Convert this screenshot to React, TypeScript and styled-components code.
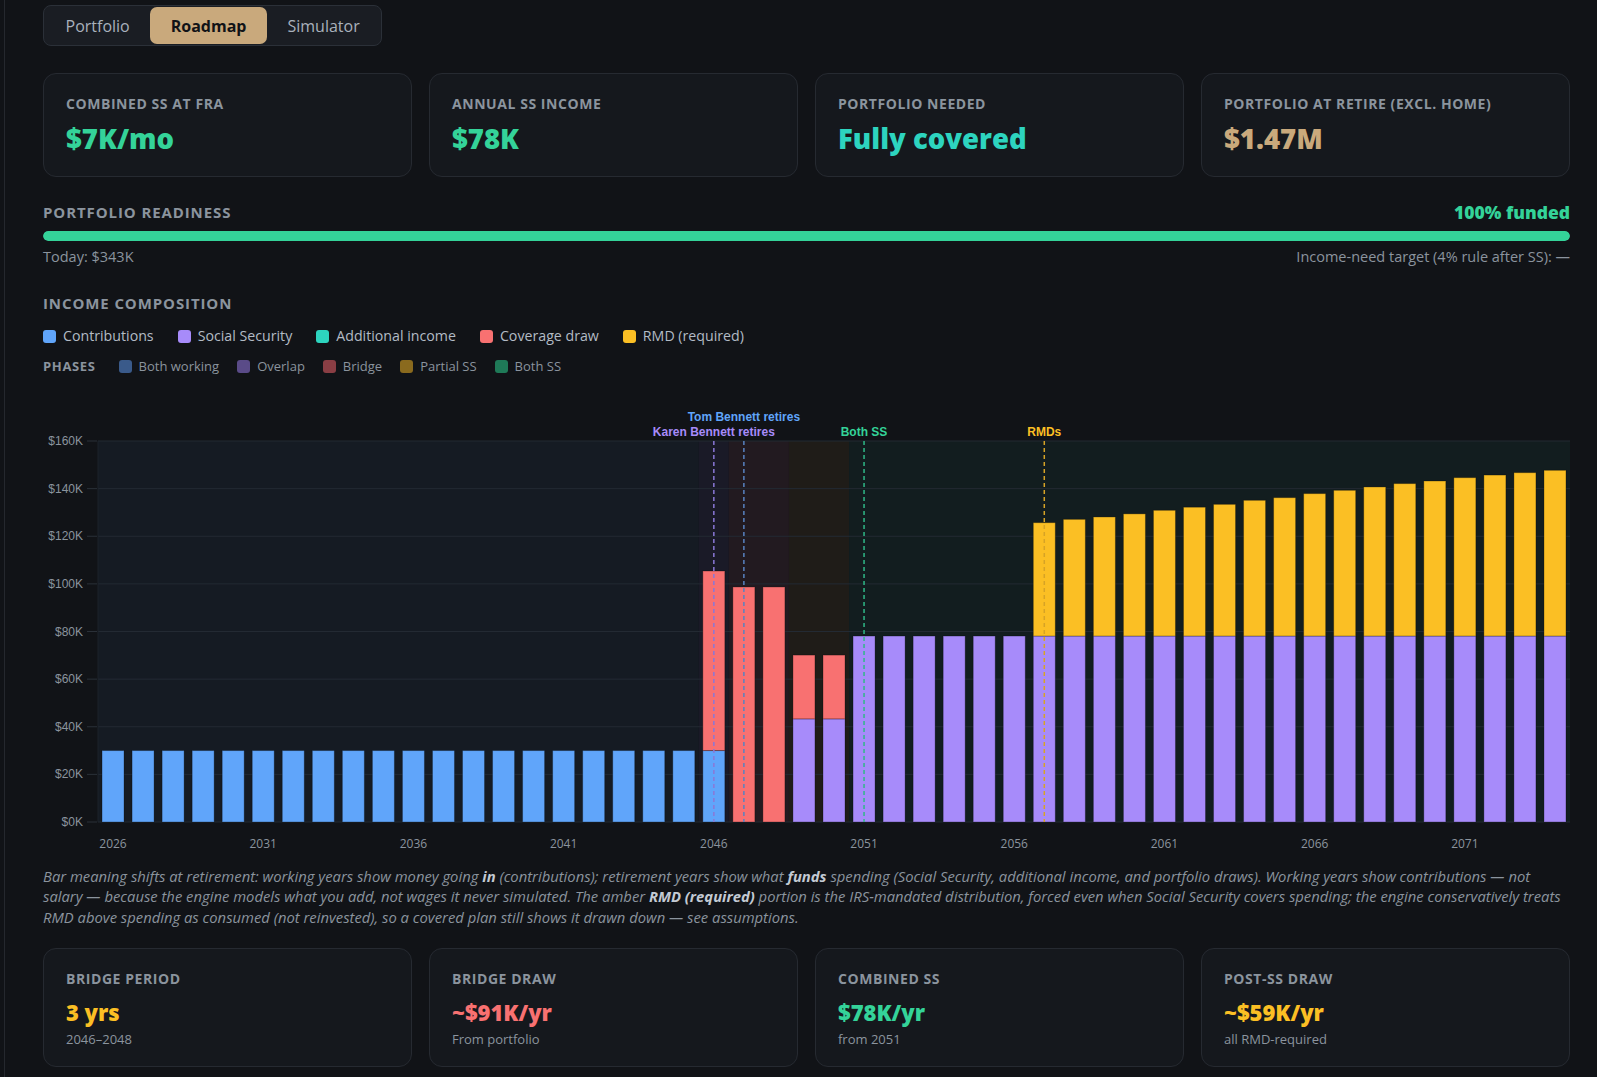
import styled, { createGlobalStyle } from "styled-components";

// ---------- Global Styles ----------
const GlobalStyle = createGlobalStyle`
  * { box-sizing: border-box; }
  html, body { overflow: hidden; }
  body {
    margin: 0;
    background: #111317;
    color: #c9d1d9;
    font-family: "Open Sans", "Noto Sans", sans-serif;
  }
`;

// ---------- palette ----------
const C = {
  contrib: "#60a5fa",
  ss: "#a78bfa",
  extra: "#2dd4bf",
  draw: "#f87171",
  rmd: "#fbbf24",
  green: "#34d399",
  tan: "#c9a97c",
  muted: "#8b949e",
};

// ---------- styled-components ----------
const S = {
  Page: styled.div`
    margin-left: 4px;
    border-left: 1px solid #25282e;
    min-height: 100vh;
    padding: 5px 27px 10px 38px;
    display: flex;
    flex-direction: column;
  `,
  Tabs: styled.nav`
    align-self: flex-start;
    display: flex;
    padding: 1px;
    border: 1px solid #2b3038;
    border-radius: 8px;
    background: #1a1d23;
  `,
  Tab: styled.button<{ $active?: boolean }>`
    height: 37px;
    padding: 0 20.5px;
    border: none;
    border-radius: 7px;
    font-family: inherit;
    font-size: 16px;
    font-weight: ${(p) => (p.$active ? 700 : 400)};
    color: ${(p) => (p.$active ? "#111317" : "#a9b1bc")};
    background: ${(p) => (p.$active ? C.tan : "transparent")};
    cursor: pointer;
  `,
  StatGrid: styled.div<{ $top: number }>`
    display: grid;
    grid-template-columns: repeat(4, 1fr);
    gap: 17px;
    margin-top: ${(p) => p.$top}px;
  `,
  Card: styled.div<{ $pad: string }>`
    background: #15181d;
    border: 1px solid #262a31;
    border-radius: 13px;
    padding: ${(p) => p.$pad};
  `,
  CardLabel: styled.div`
    font-size: 14px;
    line-height: 18px;
    font-weight: 700;
    letter-spacing: 0.04em;
    text-transform: uppercase;
    color: ${C.muted};
  `,
  CardValue: styled.div<{ $color: string; $big?: boolean }>`
    margin-top: ${(p) => (p.$big ? 8 : 9)}px;
    font-size: ${(p) => (p.$big ? 27.5 : 22)}px;
    line-height: ${(p) => (p.$big ? 36 : 30)}px;
    font-weight: 800;
    color: ${(p) => p.$color};
  `,
  CardSub: styled.div`
    margin-top: 3px;
    font-size: 13px;
    line-height: 18px;
    color: ${C.muted};
  `,
  SectionHead: styled.div<{ $top: number }>`
    display: flex;
    justify-content: space-between;
    align-items: center;
    margin-top: ${(p) => p.$top}px;
    height: 20px;
  `,
  SectionTitle: styled.h2`
    margin: 0;
    font-size: 15px;
    font-weight: 700;
    letter-spacing: 0.06em;
    text-transform: uppercase;
    color: ${C.muted};
  `,
  Funded: styled.span`
    font-size: 17.5px;
    font-weight: 800;
    color: ${C.green};
  `,
  Track: styled.div`
    margin-top: 9px;
    height: 10px;
    border-radius: 5px;
    background: #232830;
    overflow: hidden;
  `,
  Fill: styled.div`
    height: 100%;
    border-radius: 5px;
    background: ${C.green};
  `,
  MetaRow: styled.div`
    margin-top: 7px;
    display: flex;
    justify-content: space-between;
    font-size: 14.5px;
    line-height: 18px;
    color: ${C.muted};
  `,
  Legend: styled.div<{ $top: number; $gap: number }>`
    display: flex;
    align-items: center;
    gap: ${(p) => p.$gap}px;
    margin-top: ${(p) => p.$top}px;
  `,
  LegendItem: styled.span<{ $small?: boolean }>`
    display: inline-flex;
    align-items: center;
    gap: 7px;
    font-size: ${(p) => (p.$small ? 13 : 14.2)}px;
    line-height: 20px;
    color: ${(p) => (p.$small ? C.muted : "#b3bbc5")};
  `,
  Swatch: styled.i<{ $color: string }>`
    display: inline-block;
    width: 13px;
    height: 13px;
    border-radius: 3px;
    background: ${(p) => p.$color};
  `,
  PhaseLabel: styled.span`
    margin-right: 5px;
    font-size: 13px;
    font-weight: 700;
    letter-spacing: 0.05em;
    color: ${C.muted};
  `,
  ChartWrap: styled.div`
    margin-top: 15px;
    height: 462px;
    svg { display: block; }
  `,
  Caption: styled.p`
    margin: 13px 0 0;
    font-size: 14.8px;
    line-height: 20.4px;
    font-style: italic;
    color: ${C.muted};
    strong { color: #c3cad3; font-weight: 700; }
  `,
};

// ---------- data ----------
type Year = { year: number; contrib: number; ss: number; draw: number; rmd: number };

const rmdTotals = [
  125.7, 127.1, 128.1, 129.4, 130.9, 132.2, 133.4, 135.1, 136.2, 137.9,
  139.3, 140.7, 142.1, 143.2, 144.6, 145.7, 146.7, 147.7,
];

const years: Year[] = Array.from({ length: 49 }, (_, i) => {
  const year = 2026 + i;
  const row: Year = { year, contrib: 0, ss: 0, draw: 0, rmd: 0 };
  if (year <= 2045) row.contrib = 30;
  else if (year === 2046) { row.contrib = 30; row.draw = 75.4; }
  else if (year <= 2048) row.draw = 98.7;
  else if (year <= 2050) { row.ss = 43.3; row.draw = 26.8; }
  else if (year <= 2056) row.ss = 78.1;
  else { row.ss = 78.1; row.rmd = rmdTotals[year - 2057] - 78.1; }
  return row;
});

const phases = [
  { from: 2026, to: 2045, color: "#151b23" },
  { from: 2046, to: 2046, color: "#1a1a27" },
  { from: 2047, to: 2048, color: "#221a20" },
  { from: 2049, to: 2050, color: "#1f1c18" },
  { from: 2051, to: 2074, color: "#121d1f" },
];

const markers = [
  { year: 2046, label: "Karen Bennett retires", color: C.ss, line: "#8a78d6", row: 1 },
  { year: 2047, label: "Tom Bennett retires", color: C.contrib, line: "#5882c0", row: 0 },
  { year: 2051, label: "Both SS", color: C.green, line: "#2fb887", row: 1 },
  { year: 2057, label: "RMDs", color: C.rmd, line: "#d6a326", row: 1 },
];

// ---------- chart ----------
function IncomeChart() {
  const W = 1527, H = 462, PL = 55, PR = 1527, PT = 50, PB = 431;
  const band = (PR - PL) / years.length;
  const barW = 22;
  const y = (v: number) => PB - (v / 160) * (PB - PT);
  const left = (i: number) => PL + band * i;
  const cx = (i: number) => PL + band * (i + 0.5);
  const ticks = [0, 20, 40, 60, 80, 100, 120, 140, 160];
  const axisFont = '"Liberation Sans", Arial, sans-serif';

  return (
    <svg width={W} height={H} viewBox={`0 0 ${W} ${H}`}>
      {phases.map((p) => (
        <rect
          key={p.from}
          x={left(p.from - 2026)}
          y={PT}
          width={band * (p.to - p.from + 1)}
          height={PB - PT}
          fill={p.color}
        />
      ))}
      {ticks.map((t) => (
        <g key={t}>
          <line x1={PL} x2={PR} y1={y(t)} y2={y(t)} stroke="#232a33" />
          <line x1={PL - 11} x2={PL - 1} y1={y(t)} y2={y(t)} stroke="#2a3038" />
          <text
            x={PL - 15}
            y={y(t) + 4}
            textAnchor="end"
            fontFamily={axisFont}
            fontSize={12}
            fill={C.muted}
          >
            ${t}K
          </text>
        </g>
      ))}
      <line x1={PL} x2={PL} y1={PT} y2={PB} stroke="#1d232b" />

      {years.map((d, i) => {
        const x = cx(i) - barW / 2;
        const parts = [
          { v: d.contrib, c: C.contrib },
          { v: d.ss, c: C.ss },
          { v: d.draw, c: C.draw },
          { v: d.rmd, c: C.rmd },
        ];
        let base = 0;
        return (
          <g key={d.year}>
            {parts.map((p, k) => {
              if (!p.v) return null;
              const top = y(base + p.v);
              const h = y(base) - top;
              base += p.v;
              return (
                <rect
                  key={k}
                  x={x}
                  y={top}
                  width={barW}
                  height={h}
                  fill={p.c}
                  stroke="rgba(0,0,0,0.28)"
                />
              );
            })}
          </g>
        );
      })}

      {markers.map((m) => {
        const x = cx(m.year - 2026);
        return (
          <g key={m.label}>
            <line
              x1={x}
              x2={x}
              y1={PT}
              y2={PB}
              stroke={m.line}
              strokeWidth={1.5}
              strokeDasharray="4 3"
            />
            <text
              x={x}
              y={m.row ? 45 : 30}
              textAnchor="middle"
              fontFamily={axisFont}
              fontWeight={700}
              fontSize={12}
              fill={m.color}
            >
              {m.label}
            </text>
          </g>
        );
      })}

      {years
        .filter((d) => (d.year - 2026) % 5 === 0)
        .map((d) => (
          <text
            key={d.year}
            x={cx(d.year - 2026)}
            y={457}
            textAnchor="middle"
            fontFamily='"Open Sans", sans-serif'
            fontSize={12}
            fill={C.muted}
          >
            {d.year}
          </text>
        ))}
    </svg>
  );
}

// ---------- component ----------
const topStats = [
  { label: "Combined SS at FRA", value: "$7K/mo", color: C.green },
  { label: "Annual SS income", value: "$78K", color: C.green },
  { label: "Portfolio needed", value: "Fully covered", color: C.extra },
  { label: "Portfolio at retire (excl. home)", value: "$1.47M", color: C.tan },
];

const bottomStats = [
  { label: "Bridge period", value: "3 yrs", sub: "2046–2048", color: C.rmd },
  { label: "Bridge draw", value: "~$91K/yr", sub: "From portfolio", color: C.draw },
  { label: "Combined SS", value: "$78K/yr", sub: "from 2051", color: C.green },
  { label: "Post-SS draw", value: "~$59K/yr", sub: "all RMD-required", color: C.rmd },
];

const legend = [
  { label: "Contributions", color: C.contrib },
  { label: "Social Security", color: C.ss },
  { label: "Additional income", color: C.extra },
  { label: "Coverage draw", color: C.draw },
  { label: "RMD (required)", color: C.rmd },
];

const phaseLegend = [
  { label: "Both working", color: "#3a5a8a" },
  { label: "Overlap", color: "#5a4b88" },
  { label: "Bridge", color: "#8a3e44" },
  { label: "Partial SS", color: "#8a6a1e" },
  { label: "Both SS", color: "#1f7a58" },
];

export default function App() {
  return (
    <>
      <GlobalStyle />
      <S.Page>
        <S.Tabs>
          <S.Tab>Portfolio</S.Tab>
          <S.Tab $active>Roadmap</S.Tab>
          <S.Tab>Simulator</S.Tab>
        </S.Tabs>

        <S.StatGrid $top={27}>
          {topStats.map((s) => (
            <S.Card key={s.label} $pad="21px 22px 19px">
              <S.CardLabel>{s.label}</S.CardLabel>
              <S.CardValue $big $color={s.color}>
                {s.value}
              </S.CardValue>
            </S.Card>
          ))}
        </S.StatGrid>

        <S.SectionHead $top={25}>
          <S.SectionTitle>Portfolio readiness</S.SectionTitle>
          <S.Funded>100% funded</S.Funded>
        </S.SectionHead>
        <S.Track>
          <S.Fill style={{ width: "100%" }} />
        </S.Track>
        <S.MetaRow>
          <span>Today: $343K</span>
          <span>Income-need target (4% rule after SS): —</span>
        </S.MetaRow>

        <S.SectionHead $top={27}>
          <S.SectionTitle>Income composition</S.SectionTitle>
        </S.SectionHead>
        <S.Legend $top={13} $gap={24}>
          {legend.map((l) => (
            <S.LegendItem key={l.label}>
              <S.Swatch $color={l.color} />
              {l.label}
            </S.LegendItem>
          ))}
        </S.Legend>
        <S.Legend $top={10} $gap={18}>
          <S.PhaseLabel>PHASES</S.PhaseLabel>
          {phaseLegend.map((l) => (
            <S.LegendItem key={l.label} $small>
              <S.Swatch $color={l.color} />
              {l.label}
            </S.LegendItem>
          ))}
        </S.Legend>

        <S.ChartWrap>
          <IncomeChart />
        </S.ChartWrap>

        <S.Caption>
          Bar meaning shifts at retirement: working years show money going{" "}
          <strong>in</strong> (contributions); retirement years show what{" "}
          <strong>funds</strong> spending (Social Security, additional income,
          and portfolio draws). Working years show contributions — not salary —
          because the engine models what you add, not wages it never simulated.
          The amber <strong>RMD (required)</strong> portion is the IRS-mandated
          distribution, forced even when Social Security covers spending; the
          engine conservatively treats RMD above spending as consumed (not
          reinvested), so a covered plan still shows it drawn down — see
          assumptions.
        </S.Caption>

        <S.StatGrid $top={21}>
          {bottomStats.map((s) => (
            <S.Card key={s.label} $pad="21px 22px 18px">
              <S.CardLabel>{s.label}</S.CardLabel>
              <S.CardValue $color={s.color}>{s.value}</S.CardValue>
              <S.CardSub>{s.sub}</S.CardSub>
            </S.Card>
          ))}
        </S.StatGrid>
      </S.Page>
    </>
  );
}
